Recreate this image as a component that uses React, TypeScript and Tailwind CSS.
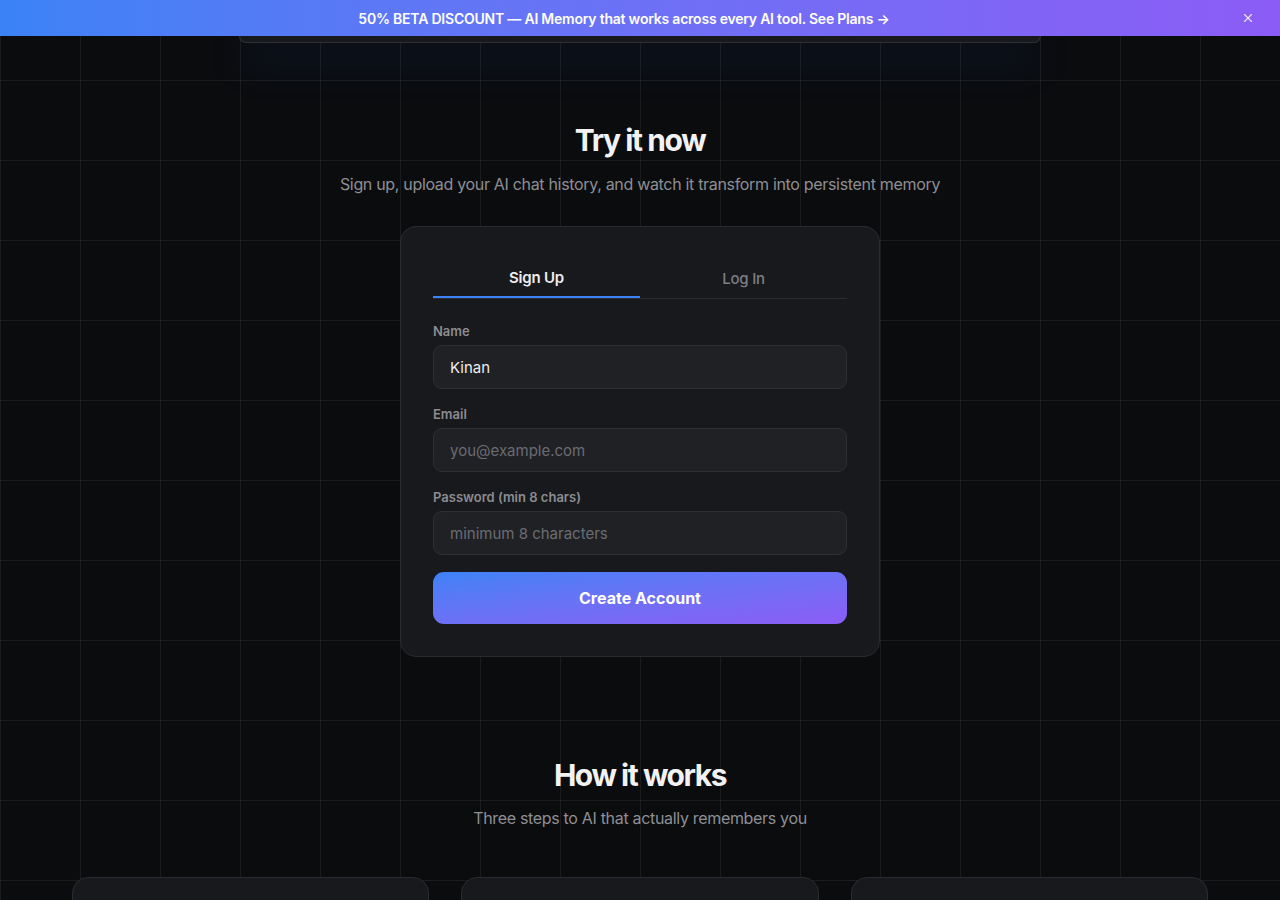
import { X } from 'lucide-react'

function Field({ label, placeholder, value, type = 'text' }: { label: string; placeholder?: string; value?: string; type?: string }) {
  return (
    <div className="flex flex-col">
      <label className="text-[13px] font-semibold text-[#8b8c91] leading-5 mb-1">{label}</label>
      <input
        type={type}
        defaultValue={value}
        placeholder={placeholder}
        className="h-[44px] w-full rounded-[9px] border border-[#2e2f34] bg-[#202125] px-4 text-[15px] text-[#ededee] placeholder:text-[#6b6c72] outline-none"
      />
    </div>
  )
}

export default function App() {
  return (
    <div
      className="min-h-screen bg-[#0b0c0e] bg-[linear-gradient(to_right,rgba(255,255,255,0.065)_1px,transparent_1px),linear-gradient(to_bottom,rgba(255,255,255,0.065)_1px,transparent_1px)] bg-[size:80px_80px] text-white"
      style={{ fontFamily: 'Inter, "Noto Sans", sans-serif' }}
    >
      {/* promo banner */}
      <div className="relative h-9 flex items-center justify-center pr-8 bg-gradient-to-r from-[#3b82f6] to-[#8b5cf6]">
        <p className="text-[14px] font-semibold text-white tracking-[-0.22px]">
          50% BETA DISCOUNT — AI Memory that works across every AI tool. See Plans →
        </p>
        <button className="absolute right-[25px] top-1/2 -translate-y-1/2 text-white/80">
          <X size={14} strokeWidth={2} />
        </button>
      </div>

      {/* nav card peeking under the banner */}
      <div className="mx-auto w-[802px] h-[7px] rounded-b-2xl border border-t-0 border-[#303136] bg-[#18191c] shadow-[0_16px_40px_rgba(37,99,235,0.32)]"></div>

      {/* try it now */}
      <section className="flex flex-col items-center pt-[79px]">
        <h2 className="text-[30px] leading-9 font-bold tracking-[-1.4px] text-[#f2f2f3]">Try it now</h2>
        <p className="mt-[14px] text-[16px] leading-6 tracking-[-0.32px] text-[#8e8f94]">
          Sign up, upload your AI chat history, and watch it transform into persistent memory
        </p>

        <div className="mt-[30px] w-[480px] rounded-2xl border border-[#2a2b30] bg-[#18191c] px-8 pt-[36px] pb-8">
          <div className="grid grid-cols-2 border-b border-[#2a2b30]">
            <button className="h-[35px] -mb-px border-b-2 border-[#3b82f6] text-[15px] tracking-[-0.2px] font-semibold text-[#ededee] pb-[2px]">Sign Up</button>
            <button className="h-[35px] text-[15px] tracking-[-0.2px] font-medium text-[#7d7e84] pb-[2px]">Log In</button>
          </div>

          <div className="mt-[22px] flex flex-col gap-[15px]">
            <Field label="Name" value="Kinan" />
            <Field label="Email" placeholder="you@example.com" type="email" />
            <Field label="Password (min 8 chars)" placeholder="minimum 8 characters" type="password" />
          </div>

          <button className="mt-[17px] h-[52px] w-full rounded-[11px] bg-gradient-to-br from-[#3b82f6] to-[#8b5cf6] text-[16px] font-bold text-white">
            Create Account
          </button>
        </div>
      </section>

      {/* how it works */}
      <section className="flex flex-col items-center pt-[100px]">
        <h2 className="text-[30px] leading-9 font-bold tracking-[-1.45px] text-[#f2f2f3]">How it works</h2>
        <p className="mt-[13px] text-[16px] leading-6 tracking-[-0.32px] text-[#8e8f94]">Three steps to AI that actually remembers you</p>

        <div className="mt-[47px] w-[1136px] grid grid-cols-3 gap-8">
          <div className="h-[200px] rounded-2xl border border-[#2a2b30] bg-[#18191c]"></div>
          <div className="h-[200px] rounded-2xl border border-[#2a2b30] bg-[#18191c]"></div>
          <div className="h-[200px] rounded-2xl border border-[#2a2b30] bg-[#18191c]"></div>
        </div>
      </section>
    </div>
  )
}
